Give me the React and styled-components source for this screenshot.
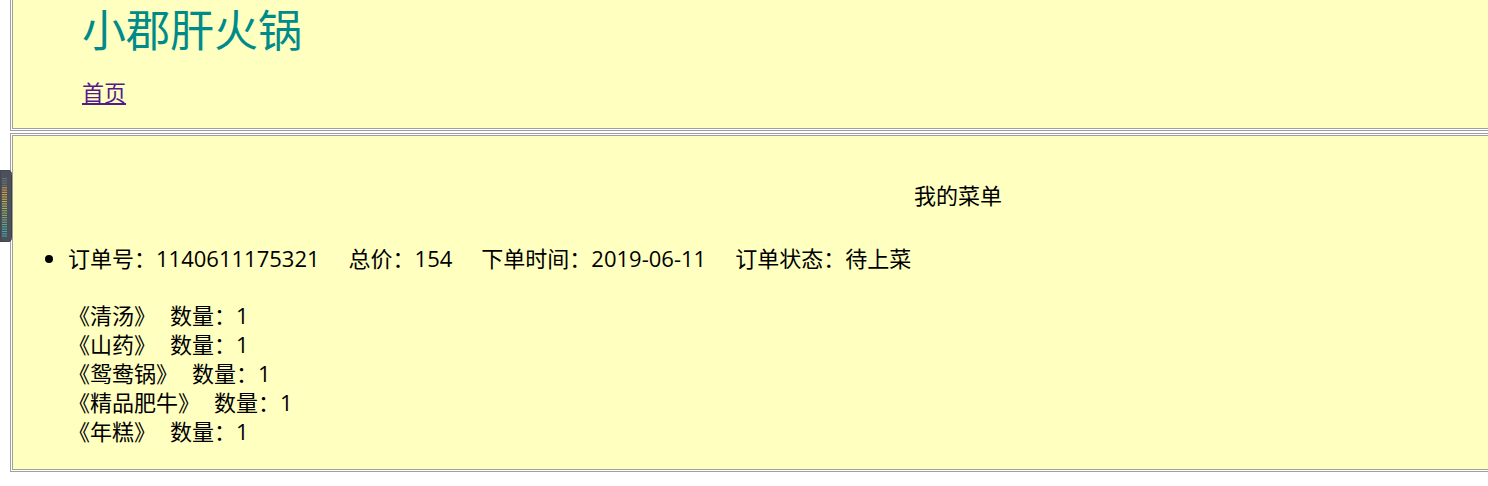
import React from 'react';
import styled, {createGlobalStyle} from 'styled-components';

const GlobalStyle = createGlobalStyle`
  html, body {
    margin: 0;
    padding: 0;
    overflow: hidden;
    background: #ffffff;
  }
  body {
    font-family: "Open Sans", "Noto Sans CJK SC", sans-serif;
    font-size: 22px;
    line-height: 29px;
    color: #000000;
  }
`;

const Page = styled.div`
  padding-left: 10px;
  margin-top: -3px;
`;

// outer table border + cellspacing
const Frame = styled.div`
  width: 1892px;
  border: 1px solid #a0a0a0;
  padding: 1px;
  & + & {
    margin-top: 2px;
  }
`;

// the cell itself
const Cell = styled.div`
  border: 1px solid #a0a0a0;
  background: #ffffc0;
  padding: ${p => p.$pad};
`;

const Title = styled.h1`
  margin: 0;
  font-size: 44px;
  line-height: 60px;
  font-weight: normal;
  color: #008b8b;
`;

const NavLink = styled.a`
  display: inline-block;
  margin-top: 18px;
  color: #551a8b;
  text-decoration: underline;
  cursor: pointer;
`;

const Heading = styled.div`
  text-align: center;
`;

const OrderList = styled.ul`
  margin: 34px 0 0 0;
  padding-left: 55px;
  list-style: disc;
`;

const Field = styled.span`
  & + & {
    margin-left: 29px;
  }
`;

const Dishes = styled.div`
  margin-top: 28px;
`;

const Dish = styled.div`
  display: flex;
  white-space: nowrap;
`;

const Count = styled.span`
  margin-left: 14px;
`;

const Meter = styled.div`
  position: fixed;
  left: 0;
  top: 170px;
  width: 12px;
  height: 72px;
`;

const order = {
    id: '1140611175321',
    total: 154,
    time: '2019-06-11',
    status: '待上菜',
    dishes: [
        {name: '清汤', qty: 1},
        {name: '山药', qty: 1},
        {name: '鸳鸯锅', qty: 1},
        {name: '精品肥牛', qty: 1},
        {name: '年糕', qty: 1},
    ],
};

const tickColor = (i) => {
    if (i < 4) return '#6c717a';
    const c = ['#d99a3a', '#d9a03e', '#d6a842', '#cfb048', '#c4b450', '#b8b458', '#aab25e', '#9cb064', '#8eae6c', '#80ac76', '#70aa82', '#60a88e', '#52a898', '#48a8a4', '#42a6aa', '#40a4ae'];
    const k = Math.min(c.length - 1, Math.floor((i - 4) * c.length / 22));
    return c[k];
};

const LevelMeter = () => (
    <Meter>
        <svg width="12" height="72" viewBox="0 0 12 72">
            <path d="M0 0 H7 Q11.5 0 11.5 4.5 V67.5 Q11.5 72 7 72 H0 Z" fill="#4b5059" stroke="#3c4048" strokeWidth="1"/>
            {Array.from({length: 26}).map((_, i) => (
                <rect key={i} x="2" y={8 + i * 2.3} width="5" height="1.1" fill={tickColor(i)}/>
            ))}
        </svg>
    </Meter>
);

const App = () => {
    return (
        <Page>
            <GlobalStyle/>
            <Frame>
                <Cell $pad="0 0 21px 69px">
                    <Title>小郡肝火锅</Title>
                    <NavLink href="#">首页</NavLink>
                </Cell>
            </Frame>
            <Frame>
                <Cell $pad="45px 0 23px 0">
                    <Heading>我的菜单</Heading>
                    <OrderList>
                        <li>
                            <Field>订单号：{order.id}</Field>
                            <Field>总价：{order.total}</Field>
                            <Field>下单时间：{order.time}</Field>
                            <Field>订单状态：{order.status}</Field>
                            <Dishes>
                                {order.dishes.map(d => (
                                    <Dish key={d.name}>
                                        <span>《{d.name}》</span>
                                        <Count>数量：{d.qty}</Count>
                                    </Dish>
                                ))}
                            </Dishes>
                        </li>
                    </OrderList>
                </Cell>
            </Frame>
            <LevelMeter/>
        </Page>
    );
};

export default App;
